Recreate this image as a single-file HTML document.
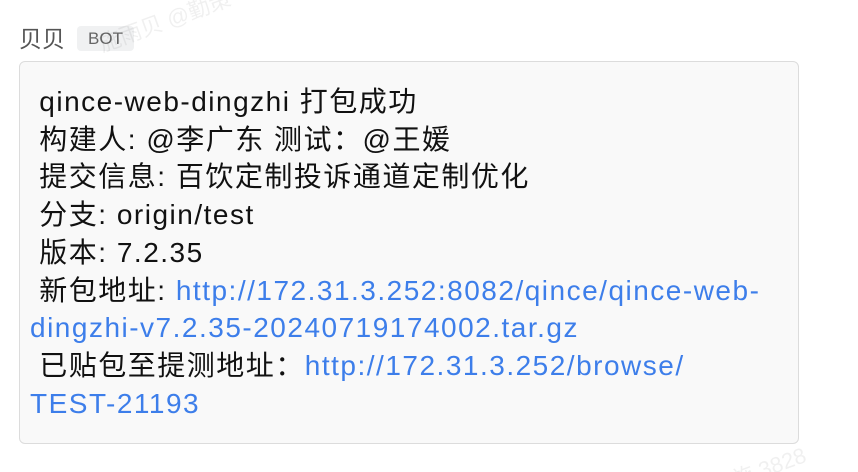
<!DOCTYPE html>
<html><head><meta charset="utf-8"><style>
html,body{margin:0;padding:0;background:#fff;width:858px;height:472px;overflow:hidden;font-family:"Liberation Sans","Noto Sans CJK SC",sans-serif;position:relative}
.name{position:absolute;left:19px;top:25px;font-size:23px;color:#555;line-height:28px}
.bot{position:absolute;left:77px;top:26px;width:57px;height:25px;background:#f0f1f2;border-radius:4px;color:#666;font-size:17px;line-height:26px;text-align:center}
.box{position:absolute;left:19px;top:61px;width:780px;height:383px;border:1px solid #dcdcdc;border-radius:6px;background:#f9f9f9;box-sizing:border-box}
.t{position:absolute;left:10px;top:21px;font-size:28px;line-height:37.7px;color:#111;white-space:pre;letter-spacing:1.5px}
a{color:#3d7eea;text-decoration:none}
.wm{position:absolute;color:rgba(0,0,0,0.06);font-size:22px;transform:rotate(-20deg)}
</style></head><body>
<div class="name">贝贝</div>
<div class="bot">BOT</div>
<div class="wm" style="left:95px;top:4px">施雨贝 @勤策</div>
<div class="box"><div class="t"> qince-web-dingzhi 打包成功
 构建人: @李广东 测试：@王媛
 提交信息: 百饮定制投诉通道定制优化
 分支: origin/test
 版本: 7.2.35
 新包地址: <a>http://172.31.3.252:8082/qince/qince-web-</a>
<a>dingzhi-v7.2.35-20240719174002.tar.gz</a>
 已贴包至提测地址：<a>http://172.31.3.252/browse/</a>
<a>TEST-21193</a></div></div>
<div class="wm" style="left:730px;top:450px">施 3828</div>
</body></html>
